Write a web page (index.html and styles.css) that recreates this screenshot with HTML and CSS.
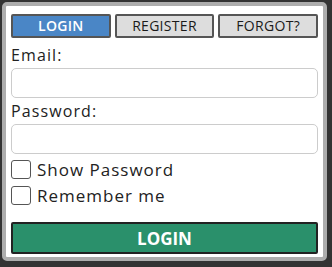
FILE: index.html
```html
<!DOCTYPE html>
<html>
<head>
<meta charset="utf-8">
<link rel="stylesheet" href="styles.css">
</head>
<body>
<div class="card">
  <div class="tabs">
    <button class="tab active">LOGIN</button>
    <button class="tab">REGISTER</button>
    <button class="tab">FORGOT?</button>
  </div>
  <label class="label first">Email:</label>
  <input class="field" type="text">
  <label class="label">Password:</label>
  <input class="field" type="password">
  <label class="check first-check"><span class="box"></span>Show Password</label>
  <label class="check"><span class="box"></span>Remember me</label>
  <button class="submit">LOGIN</button>
</div>
</body>
</html>
```
FILE: styles.css
```css
html, body {
  margin: 0;
  padding: 0;
  background: #333333;
}
body {
  font-family: "Open Sans", "DejaVu Sans", sans-serif;
  color: #222222;
}
.card {
  box-sizing: border-box;
  margin: 2px;
  width: 325px;
  height: 259px;
  background: #ffffff;
  border: 4px solid #adadad;
  border-radius: 5px;
  padding: 8px 5px 3px 5px;
  display: flex;
  flex-direction: column;
}
.tabs {
  display: grid;
  grid-template-columns: 1fr 1fr 1fr;
  gap: 4px;
  height: 24px;
}
.tab {
  box-sizing: border-box;
  height: 24px;
  border: 2px solid #555555;
  border-radius: 2px;
  background: #dddddd;
  color: #1a1a1a;
  font-family: inherit;
  font-size: 14px;
  font-weight: 500;
  letter-spacing: 0.3px;
  padding: 0;
  line-height: 20px;
}
.tab.active {
  background: #4a86c6;
  color: #ffffff;
  font-weight: 600;
}
.label {
  display: block;
  height: 26px;
  line-height: 26px;
  font-size: 16px;
  letter-spacing: 1.1px;
}
.label.first {
  margin-top: 4px;
}
.field {
  box-sizing: border-box;
  height: 30px;
  width: 100%;
  border: 1px solid #cccccc;
  border-radius: 5px;
  background: #ffffff;
  margin: 0;
}
.check {
  display: flex;
  align-items: center;
  height: 26px;
  font-size: 17px;
  letter-spacing: 1px;
  gap: 6px;
}
.check.first-check {
  margin-top: 2px;
}
.box {
  box-sizing: border-box;
  width: 20px;
  height: 19px;
  border: 1px solid #555555;
  border-radius: 3px;
  background: #ffffff;
}
.submit {
  box-sizing: border-box;
  margin-top: 14px;
  height: 32px;
  width: 100%;
  border: 2px solid #222222;
  border-radius: 2px;
  background: #2a906b;
  color: #ffffff;
  font-family: inherit;
  font-size: 17px;
  font-weight: 700;
  padding: 0;
}
```
